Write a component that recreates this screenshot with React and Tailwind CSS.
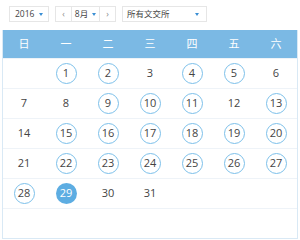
const weekdays = ['日', '一', '二', '三', '四', '五', '六'];

// null = empty cell, circled = has activity, active = selected day
const cells = [
  null, 1, 2, 3, 4, 5, 6,
  7, 8, 9, 10, 11, 12, 13,
  14, 15, 16, 17, 18, 19, 20,
  21, 22, 23, 24, 25, 26, 27,
  28, 29, 30, 31, null, null, null,
  null, null, null, null, null, null, null,
];
const circled = [1, 2, 4, 5, 9, 10, 11, 13, 15, 16, 17, 18, 19, 20, 22, 23, 24, 25, 26, 27, 28];
const active = 29;

function Caret() {
  return <span className="inline-block w-0 h-0 border-l-[2.5px] border-r-[2.5px] border-t-[3px] border-l-transparent border-r-transparent border-t-[#3b8fd4]" />;
}

function DayCell({ day }) {
  if (day === null) return <div className="h-[30px] border-t border-[#eef3f8]" />;
  const isActive = day === active;
  const isCircled = circled.includes(day);
  return (
    <div className="h-[30px] border-t border-[#eef3f8] flex items-center justify-center">
      <div
        className={`w-[21px] h-[21px] rounded-full flex items-center justify-center text-[11px] ${
          isActive
            ? 'bg-[#5dade2] text-white'
            : isCircled
            ? 'border-[1.5px] border-[#7cc0ea] text-[#444]'
            : 'text-[#444]'
        }`}
      >
        {day}
      </div>
    </div>
  );
}

export default function App() {
  return (
    <div className="w-[300px] h-[240px] bg-white overflow-hidden" style={{ fontFamily: '"Open Sans", "Noto Sans CJK SC", sans-serif' }}>
      <div className="flex items-center pt-[6px] pl-[9px] h-[16px] box-content text-[8.5px] text-[#444]">
        <div className="w-[40px] h-[16px] border border-[#e6e6e6] flex items-center justify-between px-[5px]">
          <span>2016</span>
          <Caret />
        </div>
        <div className="ml-[6px] flex h-[16px] border border-[#e6e6e6]">
          <div className="w-[15px] flex items-center justify-center text-[#888]">‹</div>
          <div className="w-[29px] flex items-center justify-center gap-[4px] border-l border-r border-[#e6e6e6]">
            <span>8月</span>
            <Caret />
          </div>
          <div className="w-[15px] flex items-center justify-center text-[#888]">›</div>
        </div>
        <div className="ml-[6px] w-[85px] h-[16px] border border-[#e6e6e6] flex items-center justify-between pl-[4px] pr-[7px]">
          <span>所有文交所</span>
          <Caret />
        </div>
      </div>
      <div className="mt-[8px] ml-[2px] w-[296px] border-l border-r border-b border-[#d9e9f5]">
        <div className="grid grid-cols-7 h-[28px] bg-[#7bb9e4] text-white text-[11px]">
          {weekdays.map((w) => (
            <div key={w} className="flex items-center justify-center">{w}</div>
          ))}
        </div>
        <div className="grid grid-cols-7">
          {cells.map((d, i) => (
            <DayCell key={i} day={d} />
          ))}
        </div>
      </div>
    </div>
  );
}
